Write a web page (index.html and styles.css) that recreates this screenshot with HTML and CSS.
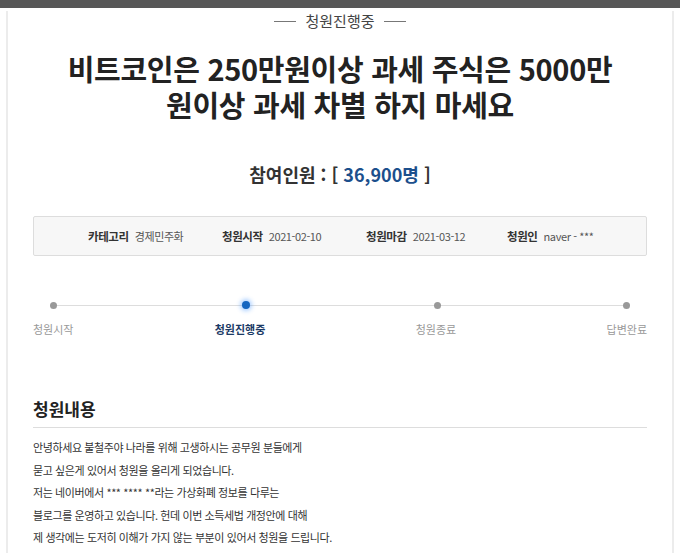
FILE: index.html
```html
<!DOCTYPE HTML>
<html lang="ko">
  <head>
  <title>청원진행중</title>
  <meta charset="utf-8">
  <link rel="stylesheet" href="styles.css">
  </head>
  <body>

  <div id="topbar"></div>

  <div id="petition">
    <div class="status"><span class="dash"></span>청원진행중<span class="dash"></span></div>

    <h1 class="title">비트코인은 250만원이상 과세 주식은 5000만<br>원이상 과세 차별 하지 마세요</h1>

    <div class="count">참여인원 : [ <span class="num">36,900명</span> ]</div>

    <ul class="meta">
      <li><strong>카테고리</strong>경제민주화</li>
      <li><strong>청원시작</strong>2021-02-10</li>
      <li><strong>청원마감</strong>2021-03-12</li>
      <li><strong>청원인</strong>naver - ***</li>
    </ul>

    <div class="progress">
      <div class="track">
        <span class="dot"></span>
        <span class="dot active"></span>
        <span class="dot"></span>
        <span class="dot"></span>
      </div>
      <div class="steps">
        <span class="first">청원시작</span>
        <span class="mid current">청원진행중</span>
        <span class="mid">청원종료</span>
        <span class="last">답변완료</span>
      </div>
    </div>

    <h2 class="section">청원내용</h2>
    <div class="content">
      안녕하세요 불철주야 나라를 위해 고생하시는 공무원 분들에게<br>
      묻고 싶은게 있어서 청원을 올리게 되었습니다.<br>
      저는 네이버에서 *** **** **라는 가상화폐 정보를 다루는<br>
      블로그를 운영하고 있습니다. 헌데 이번 소득세법 개정안에 대해<br>
      제 생각에는 도저히 이해가 가지 않는 부분이 있어서 청원을 드립니다.
    </div>
  </div>

  </body>
</html>
```

FILE: styles.css
```css
html {
  height: 100%;
}
body {
  margin: 0;
  padding: 0;
  background: #ffffff;
  color: #333333;
  font-family: "Noto Sans CJK KR", "Noto Sans", sans-serif;
  font-size: 12px;
  height: 100%;
  overflow: hidden;
}

#topbar {
  height: 8px;
  background-color: #575757;
}

#petition {
  margin: 0 6px;
  padding: 0 25px;
  border-left: 2px solid #ececec;
  border-right: 2px solid #ececec;
  min-height: 600px;
}

.status {
  margin-top: 3px;
  display: flex;
  justify-content: center;
  align-items: center;
  gap: 9px;
  font-size: 15px;
  line-height: 20px;
  color: #444;
}
.dash {
  width: 22px;
  height: 1px;
  background: #777;
}

.title {
  margin: 19px 0 0;
  text-align: center;
  font-size: 29px;
  line-height: 36px;
  font-weight: 700;
  color: #222;
  letter-spacing: -0.3px;
}

.count {
  margin-top: 38px;
  text-align: center;
  font-size: 18px;
  line-height: 28px;
  font-weight: 700;
  color: #333;
}
.count .num {
  color: #1c4f8c;
}

.meta {
  list-style: none;
  margin: 28px 0 0;
  padding: 0 0 0 54px;
  height: 38px;
  display: flex;
  align-items: center;
  background: #f7f7f7;
  border: 1px solid #dddddd;
  border-radius: 2px;
  font-size: 11px;
  letter-spacing: -0.4px;
  color: #555;
}
.meta li {
  white-space: nowrap;
}
.meta li:nth-child(1) { width: 134px; }
.meta li:nth-child(2) { width: 144px; }
.meta li:nth-child(3) { width: 141px; }
.meta strong {
  font-size: 11.5px;
  color: #333;
  margin-right: 6px;
}

.progress {
  margin-top: 42px;
}
.track {
  position: relative;
  margin: 0 20px;
  height: 14px;
  display: flex;
  justify-content: space-between;
  align-items: center;
}
.track::before {
  content: "";
  position: absolute;
  left: 0;
  right: 0;
  top: 7px;
  height: 1px;
  background: #dddddd;
}
.dot {
  position: relative;
  width: 7px;
  height: 7px;
  border-radius: 50%;
  background: #999999;
  margin: 0 -3px;
}
.dot:nth-child(2) {
  margin: 0;
}
.dot.active {
  width: 8px;
  height: 8px;
  background: #1565c0;
  box-shadow: 0 0 4px 2px rgba(70, 150, 255, 0.45);
}
.steps {
  margin-top: 8px;
  display: flex;
  font-size: 11px;
  line-height: 18px;
  color: #999;
}
.steps .first {
  width: 60px;
}
.steps .mid {
  width: 80px;
  text-align: center;
}
.steps .mid:nth-child(2) {
  margin-left: 107px;
}
.steps .mid:nth-child(3) {
  margin-left: 116px;
}
.steps .last {
  margin-left: auto;
}
.steps .current {
  color: #1b3a66;
  font-weight: 700;
}

.section {
  margin: 59px 0 0;
  padding-bottom: 6px;
  font-size: 17px;
  line-height: 24px;
  font-weight: 700;
  color: #222;
  border-bottom: 1px solid #dddddd;
}

.content {
  margin-top: 8px;
  font-size: 11px;
  line-height: 22.5px;
  letter-spacing: -0.4px;
  color: #333;
}
```
